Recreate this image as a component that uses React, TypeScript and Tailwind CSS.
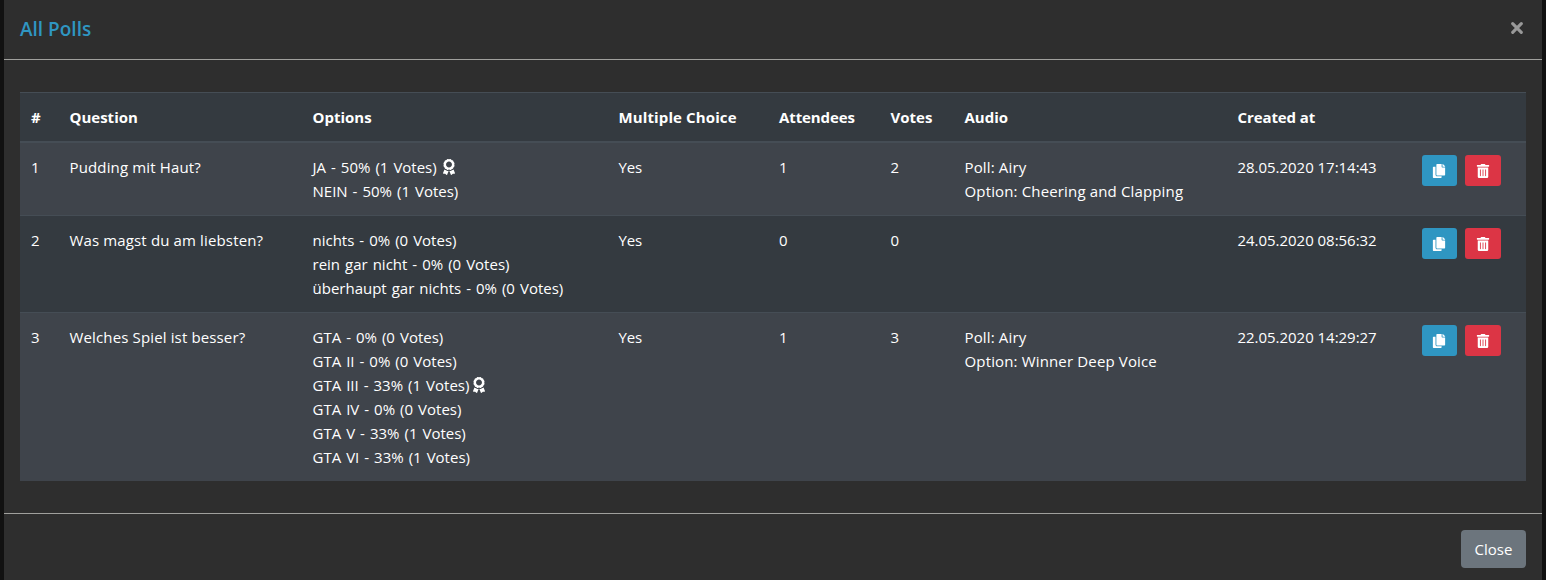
import { FaAward, FaCopy, FaTrashAlt } from "react-icons/fa";

type Option = { text: string; winner?: boolean };
type Poll = {
  id: number;
  question: string;
  options: Option[];
  multiple: string;
  attendees: number;
  votes: number;
  audio: string[];
  created: string;
};

const polls: Poll[] = [
  {
    id: 1,
    question: "Pudding mit Haut?",
    options: [{ text: "JA - 50% (1 Votes)", winner: true }, { text: "NEIN - 50% (1 Votes)" }],
    multiple: "Yes",
    attendees: 1,
    votes: 2,
    audio: ["Poll: Airy", "Option: Cheering and Clapping"],
    created: "28.05.2020 17:14:43",
  },
  {
    id: 2,
    question: "Was magst du am liebsten?",
    options: [
      { text: "nichts - 0% (0 Votes)" },
      { text: "rein gar nicht - 0% (0 Votes)" },
      { text: "überhaupt gar nichts - 0% (0 Votes)" },
    ],
    multiple: "Yes",
    attendees: 0,
    votes: 0,
    audio: [],
    created: "24.05.2020 08:56:32",
  },
  {
    id: 3,
    question: "Welches Spiel ist besser?",
    options: [
      { text: "GTA - 0% (0 Votes)" },
      { text: "GTA II - 0% (0 Votes)" },
      { text: "GTA III - 33% (1 Votes)", winner: true },
      { text: "GTA IV - 0% (0 Votes)" },
      { text: "GTA V - 33% (1 Votes)" },
      { text: "GTA VI - 33% (1 Votes)" },
    ],
    multiple: "Yes",
    attendees: 1,
    votes: 3,
    audio: ["Poll: Airy", "Option: Winner Deep Voice"],
    created: "22.05.2020 14:29:27",
  },
];

const columns = "grid grid-cols-[37.5px_243px_306px_160.5px_111.5px_74px_273px_184.5px_1fr]";
const headings = ["#", "Question", "Options", "Multiple Choice", "Attendees", "Votes", "Audio", "Created at", ""];

function PollRow({ poll, index }: { poll: Poll; index: number }) {
  const stripe = index % 2 === 0 ? "bg-[#3f444b]" : "bg-[#343a40]";
  const border = index === 0 ? "" : "border-t border-[#454d55]";
  return (
    <div className={`${columns} ${stripe} ${border} py-3 *:pl-3 whitespace-nowrap`}>
      <div className="-ml-px">{poll.id}</div>
      <div className="tracking-[0.14px]">{poll.question}</div>
      <div className="[word-spacing:1.1px]">
        {poll.options.map((o) => (
          <div key={o.text} className="flex h-6 items-center">
            <span>{o.text}</span>
            {o.winner && <FaAward className={`h-4 w-3 ${index === 0 ? "ml-1.5" : "ml-1"}`} />}
          </div>
        ))}
      </div>
      <div className="-tracking-[0.2px]">{poll.multiple}</div>
      <div>{poll.attendees}</div>
      <div>{poll.votes}</div>
      <div className="tracking-[0.15px]">
        {poll.audio.map((a) => (
          <div key={a}>{a}</div>
        ))}
      </div>
      <div className="tracking-[-0.03px]">{poll.created}</div>
      <div className="flex h-[31px] gap-2">
        <button aria-label="Copy" className="flex w-[35px] items-center justify-center rounded-[3px] bg-[#2f96c2] pr-px">
          <FaCopy className="size-3.5" />
        </button>
        <button aria-label="Delete" className="flex w-9 items-center justify-center rounded-[3px] bg-[#dc3545]">
          <FaTrashAlt className="size-3.5" />
        </button>
      </div>
    </div>
  );
}

export default function App() {
  return (
    <div className="h-[580px] overflow-hidden bg-[#111111] pr-1 pl-1 font-['Open_Sans','Noto_Sans',sans-serif] text-[15px] leading-6 text-white">
      <div className="flex h-full flex-col bg-[#2e2e2e]">
        <header className="flex h-[60px] items-center justify-between border-b border-[#a0a09d] px-4">
          <h5 className="-mt-0.5 text-[19px] font-semibold text-[#2f96c2]">All Polls</h5>
          <button aria-label="Close dialog" className="mr-[3px] mt-[-3px] text-[#999999]">
            <svg viewBox="0 0 12 12" className="size-3">
              <path d="M1.7 1.7 10.3 10.3M10.3 1.7 1.7 10.3" stroke="currentColor" strokeWidth="3.1" strokeLinecap="round" />
            </svg>
          </button>
        </header>
        <main className="h-[453px] px-4 pt-8">
          <div className={`${columns} h-[51px] border-t border-b-2 border-t-[#454d55] border-b-[#454d55] bg-[#343a40] py-3 font-bold whitespace-nowrap *:pl-3`}>
            {headings.map((h) => (
              <div key={h} className={h === "Multiple Choice" ? "tracking-[0.12px]" : h === "#" ? "-ml-px" : h === "Attendees" || h === "Created at" ? "tracking-[-0.1px]" : ""}>{h}</div>
            ))}
          </div>
          {polls.map((p, i) => (
            <PollRow key={p.id} poll={p} index={i} />
          ))}
        </main>
        <footer className="flex justify-end border-t border-[#a0a09d] px-4 pt-4">
          <button className="h-[38px] w-[65px] rounded bg-[#6c757d]">Close</button>
        </footer>
      </div>
    </div>
  );
}
